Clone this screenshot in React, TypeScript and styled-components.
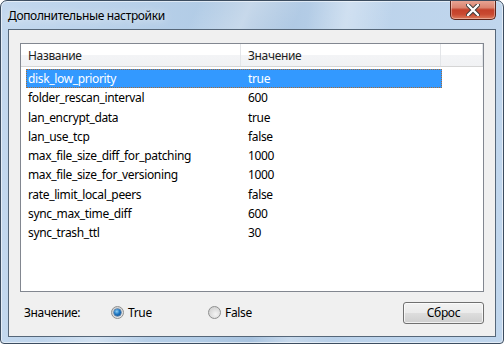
import styled, { createGlobalStyle } from 'styled-components'

const font = '"Noto Sans", "Open Sans", sans-serif'

const GlobalStyle = createGlobalStyle`
  html, body {
    margin: 0;
    padding: 0;
    width: 504px;
    height: 344px;
    overflow: hidden;
    background: #ffffff;
  }
`

const rows: [string, string][] = [
  ['disk_low_priority', 'true'],
  ['folder_rescan_interval', '600'],
  ['lan_encrypt_data', 'true'],
  ['lan_use_tcp', 'false'],
  ['max_file_size_diff_for_patching', '1000'],
  ['max_file_size_for_versioning', '1000'],
  ['rate_limit_local_peers', 'false'],
  ['sync_max_time_diff', '600'],
  ['sync_trash_ttl', '30'],
]

const Window = styled.div`
  box-sizing: border-box;
  display: flex;
  flex-direction: column;
  width: 504px;
  height: 344px;
  border: 1px solid #3c4d60;
  border-radius: 7px 7px 4px 4px;
  background:
    linear-gradient(115deg, rgba(255, 255, 255, 0) 30%, rgba(255, 255, 255, 0.35) 38%, rgba(255, 255, 255, 0) 46%),
    linear-gradient(100deg, rgba(255, 255, 255, 0) 55%, rgba(255, 255, 255, 0.3) 62%, rgba(255, 255, 255, 0) 70%),
    linear-gradient(90deg, #c3d8ee 0%, #b2cce6 40%, #a8c3df 50%, #bcd3eb 70%, #c0d6ed 100%);
  box-shadow: inset 0 0 0 1px rgba(255, 255, 255, 0.55);
  font-family: ${font};
  letter-spacing: -0.35px;
  overflow: hidden;
`

const TitleBar = styled.div`
  display: flex;
  align-items: flex-start;
  justify-content: space-between;
  height: 28px;
  flex-shrink: 0;
`

const Title = styled.div`
  padding: 6px 0 0 7px;
  font-size: 12px;
  color: #000000;
  text-shadow: 0 0 8px rgba(255, 255, 255, 0.9);
`

const CloseButton = styled.div`
  box-sizing: border-box;
  display: flex;
  align-items: center;
  justify-content: center;
  width: 46px;
  height: 20px;
  margin-right: 7px;
  margin-top: -1px;
  border: 1px solid #5b2419;
  border-top: none;
  border-radius: 0 0 5px 5px;
  background: linear-gradient(180deg, #e9a898 0%, #db8470 40%, #c4412a 52%, #c94a31 75%, #dc7a5c 100%);
  box-shadow: inset 0 0 0 1px rgba(255, 255, 255, 0.35);
`

const Client = styled.div`
  box-sizing: border-box;
  display: flex;
  flex-direction: column;
  flex: 1;
  margin: 0 7px 6px;
  padding: 13px 11px 0;
  border: 1px solid #566779;
  background: #f0f0f0;
`

const ListView = styled.div`
  box-sizing: border-box;
  height: 249px;
  border: 1px solid #828790;
  background: #ffffff;
`

const Header = styled.div`
  display: grid;
  grid-template-columns: 220px 200px 1fr;
  height: 22px;
  border-bottom: 1px solid #d5d5d5;
  background: linear-gradient(180deg, #ffffff 0%, #ffffff 50%, #f3f4f6 52%, #f1f2f4 100%);
`

const HeaderCell = styled.div`
  display: flex;
  align-items: center;
  padding-left: 7px;
  border-right: 1px solid #e3e5e8;
  font-size: 12px;
  color: #1e1e1e;
`

const Rows = styled.div`
  padding-top: 2px;
`

const Row = styled.div<{ $selected?: boolean }>`
  box-sizing: border-box;
  display: grid;
  grid-template-columns: 215px 201px;
  height: 19.25px;
  width: 416px;
  margin-left: 5px;
  align-items: center;
  font-size: 12px;
  color: ${(p) => (p.$selected ? '#ffffff' : '#000000')};
  background: ${(p) => (p.$selected ? '#3399ff' : 'transparent')};
  border: 1px dotted ${(p) => (p.$selected ? '#a46b3a' : 'transparent')};
`

const Cell = styled.div<{ $first?: boolean }>`
  padding-left: ${(p) => (p.$first ? '1px' : '6px')};
  white-space: nowrap;
  line-height: 17px;
`

const Footer = styled.div`
  display: flex;
  align-items: center;
  height: 41px;
  padding: 0 0 0 4px;
  font-size: 12px;
  color: #000000;
`

const FooterLabel = styled.div`
  width: 87px;
`

const RadioOption = styled.label<{ $width: number }>`
  display: flex;
  align-items: center;
  gap: 4px;
  width: ${(p) => p.$width}px;
`

const RadioCircle = styled.span<{ $checked?: boolean }>`
  box-sizing: border-box;
  position: relative;
  width: 13px;
  height: 13px;
  border-radius: 50%;
  border: 1px solid #8e8f8f;
  background: radial-gradient(circle at 60% 65%, #f4f4f4 0%, #d9d9d9 60%, #cbcbcb 100%);

  &::after {
    content: '';
    display: ${(p) => (p.$checked ? 'block' : 'none')};
    position: absolute;
    left: 2px;
    top: 2px;
    width: 7px;
    height: 7px;
    border-radius: 50%;
    background: radial-gradient(circle at 40% 35%, #8fd0f5 0%, #1f78c4 45%, #0b3f78 100%);
    box-shadow: 0 0 0 0.5px #1d4f86;
  }
`

const Spacer = styled.div`
  flex: 1;
`

const ResetButton = styled.button`
  box-sizing: border-box;
  width: 81px;
  height: 22px;
  margin-right: 0;
  border: 1px solid #707070;
  border-radius: 3px;
  background: linear-gradient(180deg, #f2f2f2 0%, #ebebeb 48%, #dddddd 52%, #cfcfcf 100%);
  box-shadow: inset 0 0 0 1px rgba(255, 255, 255, 0.7);
  font-family: ${font};
  letter-spacing: -0.35px;
  font-size: 12px;
  color: #000000;
  padding: 0;
`

const CloseIcon = () => (
  <svg width="14" height="12" viewBox="0 0 14 12">
    <path
      d="M2 1 L12 11 M12 1 L2 11"
      stroke="#3a3a3a"
      strokeWidth="4.2"
      strokeLinecap="round"
    />
    <path
      d="M2 1 L12 11 M12 1 L2 11"
      stroke="#ffffff"
      strokeWidth="2.4"
      strokeLinecap="round"
    />
  </svg>
)

export default function App() {
  return (
    <>
      <GlobalStyle />
      <Window>
        <TitleBar>
          <Title>Дополнительные настройки</Title>
          <CloseButton>
            <CloseIcon />
          </CloseButton>
        </TitleBar>
        <Client>
          <ListView>
            <Header>
              <HeaderCell>Название</HeaderCell>
              <HeaderCell>Значение</HeaderCell>
              <HeaderCell />
            </Header>
            <Rows>
              {rows.map(([name, value], i) => (
                <Row key={name} $selected={i === 0}>
                  <Cell $first>{name}</Cell>
                  <Cell>{value}</Cell>
                </Row>
              ))}
            </Rows>
          </ListView>
          <Footer>
            <FooterLabel>Значение:</FooterLabel>
            <RadioOption $width={97}>
              <RadioCircle $checked />
              True
            </RadioOption>
            <RadioOption $width={60}>
              <RadioCircle />
              False
            </RadioOption>
            <Spacer />
            <ResetButton>Сброс</ResetButton>
          </Footer>
        </Client>
      </Window>
    </>
  )
}
